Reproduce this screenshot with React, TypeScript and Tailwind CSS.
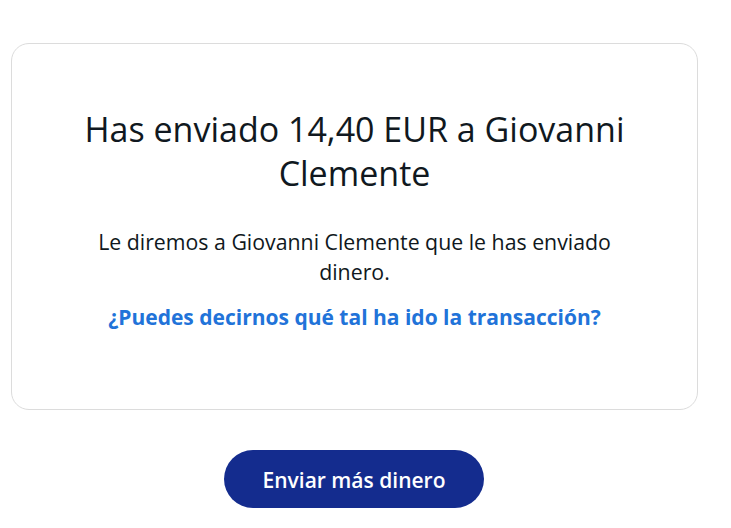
export default function App() {
  return (
    <div className="w-[731px] h-[528px] bg-white overflow-hidden" style={{ fontFamily: "'Open Sans', 'Noto Sans', sans-serif" }}>
      <div className="pt-[43px] pl-[11px] w-[698px]">
        <div className="border border-[#dcdcdc] rounded-[18px] h-[367px] flex flex-col items-center pt-[63px] px-[30px]">
          <h1 className="text-[34px] leading-[44px] text-[#101820] text-center font-normal w-[600px]">
            Has enviado 14,40 EUR a Giovanni Clemente
          </h1>
          <p className="mt-[32px] text-[21.3px] leading-[30px] text-[#101820] text-center w-[540px]">
            Le diremos a Giovanni Clemente que le has enviado dinero.
          </p>
          <a className="mt-[15px] text-[21px] leading-[30px] font-bold text-[#2173d9] text-center">
            ¿Puedes decirnos qué tal ha ido la transacción?
          </a>
        </div>
      </div>
      <div className="flex justify-center mt-[40px] w-[708px]">
        <button className="h-[58px] w-[260px] rounded-full bg-[#142c8e] text-white text-[21px] font-semibold pt-[3px]">
          Enviar más dinero
        </button>
      </div>
    </div>
  );
}
